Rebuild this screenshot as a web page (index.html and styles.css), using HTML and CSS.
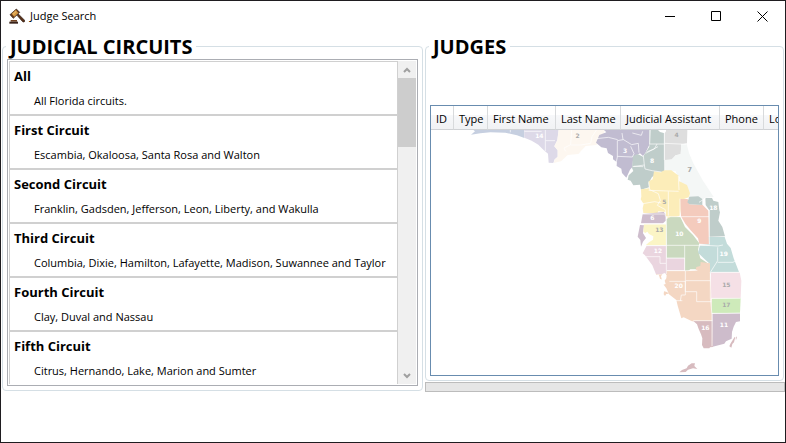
FILE: index.html
```html
<!DOCTYPE html>
<html lang="en">
<head>
<meta charset="utf-8">
<title>Judge Search</title>
<link rel="stylesheet" href="styles.css">
</head>
<body>
<header class="titlebar">
  <svg class="app-icon" viewBox="0 0 48 48" aria-hidden="true">
    <path d="M24 22l4-4 18 18c3 4-1 8-5 5z" fill="#5b3219" stroke="#2b1a12" stroke-width="2"/>
    <path d="M3 20L22 3l10 10-19 18z" fill="#6b3c1c" stroke="#2b1a12" stroke-width="2"/>
    <path d="M8 17l12-11 8 9-12 11z" fill="#d79b45"/>
    <path d="M12 19l10-9" stroke="#f4c67a" stroke-width="3"/>
    <path d="M5 36h19v5H5z" fill="#70401f"/>
    <path d="M1 41h26v6H1z" fill="#38231a"/>
  </svg>
  <h1 class="title">Judge Search</h1>
  <div class="window-buttons">
    <button type="button" aria-label="Minimize"><svg viewBox="0 0 11 11"><path d="M0 5.500h10"/></svg></button>
    <button type="button" aria-label="Maximize"><svg viewBox="0 0 11 11"><path d="M.5 .5h9v9h-9z"/></svg></button>
    <button type="button" aria-label="Close"><svg viewBox="0 0 11 11"><path d="M.5 .5l10 10M10.500 .5l-10 10"/></svg></button>
  </div>
</header>
<main class="columns">
  <fieldset class="group">
    <legend>JUDICIAL CIRCUITS</legend>
    <div class="listbox">
      <ul class="circuits">
        <li><h2>All</h2><p>All Florida circuits.</p></li>
        <li><h2>First Circuit</h2><p>Escambia, Okaloosa, Santa Rosa and Walton</p></li>
        <li><h2>Second Circuit</h2><p>Franklin, Gadsden, Jefferson, Leon, Liberty, and Wakulla</p></li>
        <li><h2>Third Circuit</h2><p>Columbia, Dixie, Hamilton, Lafayette, Madison, Suwannee and Taylor</p></li>
        <li><h2>Fourth Circuit</h2><p>Clay, Duval and Nassau</p></li>
        <li><h2>Fifth Circuit</h2><p>Citrus, Hernando, Lake, Marion and Sumter</p></li>
      </ul>
      <div class="scrollbar">
        <button type="button" aria-label="Scroll up"><svg viewBox="0 0 8 6"><path d="M1 5l3-3 3 3"/></svg></button>
        <div class="track"><div class="thumb"></div></div>
        <button type="button" aria-label="Scroll down"><svg viewBox="0 0 8 6"><path d="M1 1l3 3 3-3"/></svg></button>
      </div>
    </div>
  </fieldset>
  <div class="results">
    <fieldset class="group judges">
      <legend>JUDGES</legend>
      <div class="grid">
        <table>
          <colgroup><col class="c-id"><col class="c-type"><col class="c-first"><col class="c-last"><col class="c-assistant"><col class="c-phone"><col class="c-location"></colgroup>
          <thead><tr><th>ID</th><th>Type</th><th>First Name</th><th>Last Name</th><th>Judicial Assistant</th><th>Phone</th><th>Location</th></tr></thead>
        </table>
        <svg class="map" viewBox="-477 30 1041 735" preserveAspectRatio="xMidYMid slice" role="img" aria-label="Map of Florida judicial circuits">
          <g transform="translate(-495 -75)">
            <path fill="#c6cfe0" d="M138 119l12-10-6-5h154v25l-22-8-35-8-45-1-30 3z"/>
            <path fill="#ddd9e8" d="M298 104h103l-4 32-9 18 10 12v19l-9 8-4 11-14-1-2-27-14-12-15-15-20-12-22-9z"/>
            <path fill="#fdf7f0" d="M401 104h140l-8 18-19 28-32 3-12 13-10 11-32 3-20 19-22 5 3-10 9-9v-19l-10-12 9-18z"/>
            <path class="b" d="M298 109h52M361 104v64M362 137h28M256 104v8M440 104l-3 45-20 10 5 10M437 150h30l30-5 4-20 14-21"/>
          </g>
          <path fill="#c1bcd1" d="M42 30h136v44l-12 25-7 9-9-8-20 10-3 31-7 8-11 24-13-14-2-13-14-8v-12l-11-8v-10l-15-9-4-14-16-3-16-14 10-23 21-8z"/>
          <path fill="#bfcdca" d="M179 30h44v126h-13l-24 15-10 18 1 13-24 7-3-15-20 2-8-14-9-3 3-13 14-13-4-9 3-36 14-6 16 8 19-30z"/>
          <path fill="#dedede" d="M224 30h68l-1 40-17 3-2 30-15 3-12 13-21 2z"/>
          <path fill="#fff" d="M204 30h24v4l-4 6-14-4z"/>
          <path fill="#f4f7f6" d="M224 120l21-2 12-12 15-4 2-30h16l7 27 13 31 28 51 33 50-27 3-13 10-39-11-2-21-25-36-8-22-31-2z"/>
          <path fill="#fcedb9" d="M153 208l25-3-2-21 12-6 4-24 20 2 12-5h20l22 16 2 17 23 11 9 25-4 12-16 6-11 50-30 9-12-8v-13l-22-2-3 6-42-1-2-14 3-13-9-14 2-8z"/>
          <path fill="#f4cbbd" d="M270 237h23l5 16 40 2 17 17 2 101-29-2-4-16-22-24-16-20-13-22z"/>
          <path fill="#bfcdca" d="M292 247l6-17 27-1 12 8v18l-39-2zM346 234h20l4 8 15 4 3 25 2 6-5 25 12 19 8 28-47 1V271l-11-16z"/>
          <path fill="#cebdcd" d="M158 282l63-6 6 6v20l-8 8h-66zM150 315l12 1-3 24 9 14-9 11-6 15-2-20-8-10z"/>
          <path fill="#fbf5c6" d="M162 313h66v63h-61l10-9 12-8 1-10-13-7-5-7-6 4-6-4z"/>
          <path fill="#cad9bf" d="M229 297l14-7 28 1 14 30 24 24 19 25-4 20 7 25 22 15-20 7-12 11h-20l-8 6h-8v-40h-55z"/>
          <path fill="#ead5df" d="M170 377h59v38h55v36h-55v12h-31l-11-27-22-30-7-6z"/>
          <path fill="#c3dcda" d="M330 375l28-2-2-22h48l7 20 11 13 9 31 16 41-79 1-9 4v-30l-18-16-17-17z"/>
          <path fill="#f4d7c3" d="M198 464l32-2v-10h65l22-1 2-10 12-3 1-12 28 4v30l6 120v23l-60 1-25-12-7 3-11-38-4-17-22-17-8-18-9-12-2-13-8-4-3-10-7-4z"/>
          <path fill="#f5e0e6" d="M362 457h87l5 25-2 52-88 2z"/>
          <path fill="#ceeaba" d="M366 536l86-2-2 44-85 2z"/>
          <path fill="#cdbccb" d="M367 581l83-2v25l-12 2-7 14-5 16-1 20-17 8-5 7-35 9z"/>
          <path fill="#d7bbbf" d="M310 603h57l2 78-9 1-2 3h-17l-5-10 1-20-4-12-7-16-5-14zM434 651h2l-4 16-5 5-3 11-6-4 4-9zM438 660l3-8-1-3-3 7zM268 757l8-7 14-5 4-8 11-7h10l-2 8 9 9-13-2-15 4-7 7z"/>
          <path fill="#fff" d="M213 469l5-8 7-2 5 7-1 9-5 7 3 10-9 3-6-5 3-13z"/>
          <path fill="#f4d7c3" d="M222 514l9 2 6 5-8 1-4 6-4-5z"/>
          <path class="b" d="M96 39l3 20-17 3v49l-5 25M20 56l35-4 28 7M99 58l26 16 20-4 2 28M82 109l45 2 5-10-10-22M127 39l27 7 4-12M223 30v90M179 72h44M172 95l21-8 8-15M167 100l37-20M160 107l3 28-35 5M163 135l2 12 21 5 28 4M224 70l65 3M131 139l29 1M268 170l2 14M265 168l2 42M176 211l90 3M176 185l3 24 26 12 6 20-9 15 24 13v20M235 214v73M159 251l35-6 20 4M270 236v53M227 290h130M347 234l-20 13M358 270v104M229 290v161M229 376h130M284 376v76M229 414h55M162 377h67M168 410h42v20h18M329 375l55 3 15-3M383 382v40l-22 35M383 427h46l8-5M230 452h56l36-1M286 452v30h75M286 482v33h34v30h44M286 483v42h-12l-3 18M238 484h48M257 542h20M361 456v78l5 50v95M310 602h57M362 457h88M363 535h89M365 580h86M181 30l-2 43M153 282h74M153 312h75"/>
          <g class="dark">
            <text x="-37" y="53">2</text><text x="260" y="51">4</text><text class="big" x="299" y="155">7</text><text x="223" y="251">5</text><text x="208" y="337">13</text><text x="409" y="501">15</text><text x="409" y="562">17</text>
          </g>
          <g class="light">
            <text x="-152" y="54">14</text><text x="105" y="99">3</text><text x="186" y="129">8</text><text x="187" y="300">6</text><text x="328" y="309">9</text><text x="370" y="269">18</text><text x="268" y="347">10</text><text x="204" y="399">12</text><text x="401" y="408">19</text><text x="266" y="505">20</text><text x="346" y="629">16</text><text x="402" y="621">11</text>
          </g>
        </svg>
      </div>
    </fieldset>
    <div class="progress" role="progressbar" aria-label="Search progress"></div>
  </div>
</main>
</body>
</html>
```
FILE: styles.css
```css
* { box-sizing: border-box; }
body {
  margin: 0;
  min-height: 100vh;
  border: 1px solid #1f1d20;
  background: #fff;
  color: #000;
  font: 11px/16px "Open Sans", "Noto Sans", sans-serif;
}
.titlebar { display: flex; align-items: center; height: 30px; padding-left: 8px; }
.app-icon { width: 16px; height: 16px; margin-right: 5px; }
.title { margin: 0; font-size: 11px; font-weight: 400; }
.window-buttons { display: flex; margin-left: auto; }
.window-buttons button {
  display: flex; align-items: center; justify-content: center;
  width: 46px; height: 30px; padding: 0; border: 0; background: none;
}
.window-buttons svg { width: 11px; height: 11px; fill: none; stroke: #000; }
.columns {
  display: grid;
  grid-template-columns: 421fr 360fr;
  gap: 2px;
  align-items: start;
  padding: 3px 0 0 1px;
}
.group {
  min-width: 0;
  margin: 0;
  padding: 0 4px 4px;
  border: 1px solid #d5dfe5;
  border-radius: 4px;
}
legend {
  height: 25px;
  margin-left: -1px;
  padding: 0 4px;
  font-size: 20px;
  font-weight: 700;
  line-height: 25px;
}
.listbox {
  display: flex;
  height: 327px;
  padding: 1px;
  border: 1px solid #abadb3;
}
.circuits { flex: 1; min-width: 0; margin: 0; padding: 0; overflow: hidden; list-style: none; }
.circuits li { height: 54px; padding: 5px 4px; border: 1px solid #d0d0d0; white-space: nowrap; }
.circuits h2 { margin: 0; font-size: 13px; line-height: 18px; }
.circuits p { margin: 8px 0 0 20px; }
.scrollbar { display: flex; flex-direction: column; width: 18px; background: #f0f0f0; }
.scrollbar button {
  display: flex; align-items: center; justify-content: center;
  height: 17px; padding: 0; border: 0; background: none;
}
.scrollbar svg { width: 8px; height: 6px; fill: none; stroke: #a0a0a0; stroke-width: 2; }
.track { flex: 1; }
.thumb { height: 24%; background: #cdcdcd; }
.results { min-width: 0; }
.judges { margin-right: 1px; }
.judges .grid { margin-top: 46px; border: 1px solid #688caf; overflow: hidden; }
table { width: 393px; table-layout: fixed; border-collapse: separate; border-spacing: 0; }
.c-id { width: 23px; }
.c-type { width: 34px; }
.c-first { width: 68px; }
.c-last { width: 65px; }
.c-assistant { width: 99px; }
.c-phone { width: 44px; }
.c-location { width: 60px; }
th {
  height: 24px;
  padding: 2px 0 0 5px;
  border-right: 1px solid #d8dadc;
  border-bottom: 1px solid #d0d2d5;
  background: linear-gradient(#fff 40%, #f7f8fa 40%, #f1f2f4);
  font-weight: 400;
  text-align: left;
  white-space: nowrap;
}
.map { display: block; width: 100%; }
.map .b { fill: none; stroke: #fff; stroke-width: 2; }
.map text { font: 700 18px "DejaVu Sans", sans-serif; text-anchor: middle; }
.map .big { font-size: 21px; }
.dark { fill: #aaa; }
.light { fill: #fff; }
.progress { height: 10px; margin-top: 1px; border: 1px solid #bcbcbc; background: #e6e6e6; }
```
